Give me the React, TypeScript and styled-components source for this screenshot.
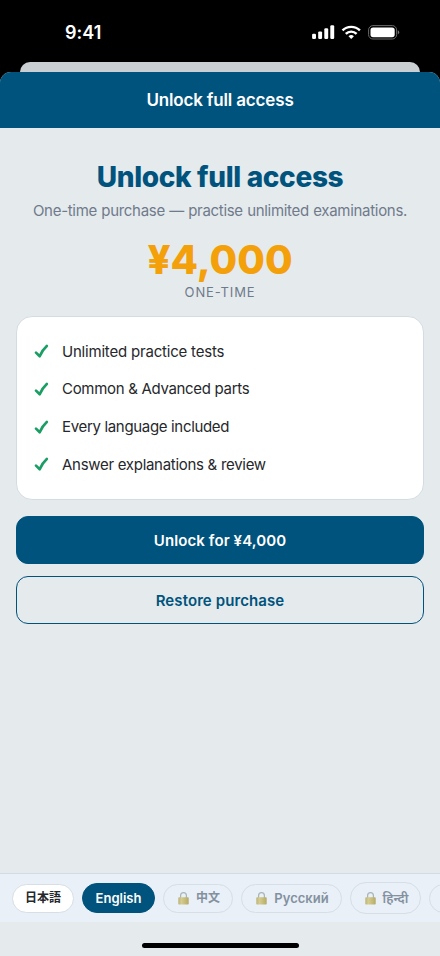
import React from "react";
import styled, { createGlobalStyle } from "styled-components";

const color = {
  brand: "#00537c",
  page: "#e5eaed",
  muted: "#6f7a8b",
  line: "#d3dce3",
  ink: "#26282b",
  amber: "#f3a00a",
  green: "#1a9e63",
};

const GlobalStyle = createGlobalStyle`
  * { box-sizing: border-box; }
  body {
    margin: 0;
    background: #000;
    font-family: Inter, "Noto Sans CJK JP", "Noto Sans", sans-serif;
  }
`;

const Screen = styled.div`
  width: 440px;
  height: 956px;
  display: flex;
  flex-direction: column;
  overflow: hidden;
  background: #000;
`;

const StatusBar = styled.header`
  height: 62px;
  flex: none;
  display: flex;
  justify-content: space-between;
  padding: 22px 40px 0 65px;
  color: #fff;
`;

const Clock = styled.span`
  font-size: 18px;
  line-height: 22px;
  font-weight: 560;
  letter-spacing: 0.05px;
`;

const StatusIcons = styled.svg`
  display: block;
  width: 90px;
  height: 20px;
`;

const SheetBehind = styled.div`
  height: 10px;
  flex: none;
  margin: 0 20px;
  border-radius: 10px 10px 0 0;
  background: #cacfd3;
`;

const Sheet = styled.main`
  flex: 1;
  min-height: 0;
  display: flex;
  flex-direction: column;
  border-radius: 11px 11px 0 0;
  overflow: hidden;
  background: ${color.page};
`;

const NavBar = styled.div`
  height: 56px;
  flex: none;
  display: flex;
  align-items: center;
  justify-content: center;
  background: ${color.brand};
  color: #fff;
  font-size: 17px;
  font-weight: 600;
  letter-spacing: -0.16px;
`;

const Content = styled.section`
  flex: 1;
  display: flex;
  flex-direction: column;
  padding: 0 16px;
`;

const Title = styled.h1`
  margin: 32px 0 0;
  text-align: center;
  font-size: 28px;
  line-height: 34px;
  font-weight: 800;
  letter-spacing: -0.34px;
  color: ${color.brand};
`;

const Subtitle = styled.p`
  margin: 7px 0 0;
  text-align: center;
  white-space: nowrap;
  font-size: 15px;
  line-height: 20px;
  font-weight: 380;
  letter-spacing: -0.3px;
  word-spacing: 0.4px;
  color: ${color.muted};
`;

const Price = styled.div`
  margin-top: 15px;
  text-align: center;
  font-size: 40px;
  line-height: 48px;
  font-weight: 800;
  color: ${color.amber};
`;

const PriceNote = styled.div`
  text-align: center;
  font-size: 13px;
  line-height: 16px;
  font-weight: 380;
  letter-spacing: 0.85px;
  color: ${color.muted};
`;

const FeatureCard = styled.ul`
  list-style: none;
  margin: 16px 0 0;
  height: 184px;
  padding: 16px 17px;
  display: grid;
  grid-template-rows: repeat(4, 37.67px);
  border: 1px solid ${color.line};
  border-radius: 16px;
  background: #fff;
`;

const Feature = styled.li<{ $tracking: number }>`
  display: flex;
  align-items: center;
  gap: 13px;
  font-size: 15px;
  line-height: 20px;
  font-weight: 390;
  letter-spacing: ${(p) => p.$tracking}px;
  color: ${color.ink};
`;

const CheckIcon = styled.svg`
  width: 15px;
  height: 15px;
  flex: none;
`;

const ActionButton = styled.button<{ $outlined?: boolean; $gap: number }>`
  height: 48px;
  margin: ${(p) => p.$gap}px 0 0;
  padding: 1px 0 0;
  border: 1.4px solid ${color.brand};
  border-radius: 12px;
  background: ${(p) => (p.$outlined ? "transparent" : color.brand)};
  color: ${(p) => (p.$outlined ? color.brand : "#fff")};
  font: 600 15px/20px Inter, sans-serif;
  letter-spacing: 0.1px;
`;

const LanguageBar = styled.nav`
  height: 49px;
  flex: none;
  display: flex;
  align-items: center;
  gap: 8px;
  padding: 0 12px;
  overflow: hidden;
  border-top: 1px solid ${color.line};
  background: #e9f0f7;
`;

const Pill = styled.button<{ $state: "free" | "active" | "locked"; $width: number; $height?: number }>`
  width: ${(p) => p.$width}px;
  height: ${(p) => p.$height ?? 29}px;
  flex: none;
  display: flex;
  align-items: center;
  justify-content: center;
  gap: 7px;
  padding: 0;
  border: 1px solid ${(p) => (p.$state === "active" ? color.brand : "#d6dfe6")};
  border-radius: 16px;
  background: ${(p) => ({ free: "#fff", active: color.brand, locked: "transparent" })[p.$state]};
  color: ${(p) => ({ free: color.ink, active: "#fff", locked: "#84909f" })[p.$state]};
  font: 600 13px/18px Inter, "Noto Sans CJK JP", "Noto Sans", sans-serif;
`;

const CjkLabel = styled.span`
  font-size: 12px;
  font-weight: 700;
`;

const LockIcon = styled.svg`
  width: 11px;
  height: 13px;
  flex: none;
  margin-left: 2px;
`;

const HomeArea = styled.footer`
  height: 34px;
  flex: none;
  display: flex;
  align-items: flex-end;
  justify-content: center;
  padding-bottom: 8px;
`;

const HomeIndicator = styled.div`
  width: 157px;
  height: 5px;
  border-radius: 3px;
  background: #000;
`;

const features = [
  { label: "Unlimited practice tests", tracking: -0.2 },
  { label: "Common & Advanced parts", tracking: -0.31 },
  { label: "Every language included", tracking: -0.33 },
  { label: "Answer explanations & review", tracking: -0.29 },
];

const Check = () => (
  <CheckIcon viewBox="0 0 15 15" fill="none">
    <path
      d="M2 8.6 5.7 12.2 Q8.3 6 12.8 2"
      stroke={color.green}
      strokeWidth="2.7"
      strokeLinecap="round"
      strokeLinejoin="round"
    />
  </CheckIcon>
);

const Lock = () => (
  <LockIcon viewBox="0 0 11 13">
    <defs>
      <linearGradient id="lock-body" x1="0" x2="1">
        <stop offset="0" stopColor="#bbb37c" />
        <stop offset="0.3" stopColor="#d6cc8f" />
        <stop offset="1" stopColor="#b5ab68" />
      </linearGradient>
    </defs>
    <path d="M2.6 6V3.6a2.9 3 0 0 1 5.8 0V6" fill="none" stroke="#a8b3bb" strokeWidth="1.2" />
    <rect x="0.3" y="5.2" width="10.4" height="7.2" rx="0.7" fill="url(#lock-body)" />
  </LockIcon>
);

export default function App() {
  return (
    <Screen>
      <GlobalStyle />
      <StatusBar>
        <Clock>9:41</Clock>
        <StatusIcons viewBox="310 22 90 20" fill="#fff">
          <rect x="312.1" y="33.8" width="3.9" height="5.2" rx="1.2" />
          <rect x="318.2" y="31.4" width="3.9" height="7.6" rx="1.2" />
          <rect x="324.3" y="28.3" width="3.9" height="10.7" rx="1.2" />
          <rect x="330.3" y="25.3" width="3.9" height="13.7" rx="1.2" />
          <g fill="none" stroke="#fff" strokeWidth="2.4">
            <path d="M342.5 30.4a12.4 12.4 0 0 1 17.4 0" />
            <path d="M345.8 33.9a7.6 7.6 0 0 1 10.8 0" />
          </g>
          <path d="M351.2 39.1l-2.7-2.8a4 4 0 0 1 5.4 0z" />
          <rect x="368.6" y="25.6" width="28" height="13.4" rx="4.3" fill="none" stroke="#6b6b6b" />
          <rect x="370.5" y="27.4" width="24.2" height="9.8" rx="2.6" />
          <path d="M397.8 30.2q1.4.6 1.4 2.1t-1.4 2.1z" fill="#777" />
        </StatusIcons>
      </StatusBar>
      <SheetBehind />
      <Sheet>
        <NavBar>Unlock full access</NavBar>
        <Content>
          <Title>Unlock full access</Title>
          <Subtitle>One-time purchase — practise unlimited examinations.</Subtitle>
          <Price>¥4,000</Price>
          <PriceNote>ONE-TIME</PriceNote>
          <FeatureCard>
            {features.map(({ label, tracking }) => (
              <Feature key={label} $tracking={tracking}>
                <Check />
                {label}
              </Feature>
            ))}
          </FeatureCard>
          <ActionButton $gap={16}>Unlock for ¥4,000</ActionButton>
          <ActionButton $gap={12} $outlined>Restore purchase</ActionButton>
        </Content>
        <LanguageBar>
          <Pill $state="free" $width={62}><CjkLabel>日本語</CjkLabel></Pill>
          <Pill $state="active" $width={73} $height={30}>English</Pill>
          <Pill $state="locked" $width={70}><Lock /><CjkLabel>中文</CjkLabel></Pill>
          <Pill $state="locked" $width={101}><Lock />Русский</Pill>
          <Pill $state="locked" $width={71} $height={32}><Lock />हिन्दी</Pill>
          <Pill $state="locked" $width={90} />
        </LanguageBar>
        <HomeArea>
          <HomeIndicator />
        </HomeArea>
      </Sheet>
    </Screen>
  );
}
